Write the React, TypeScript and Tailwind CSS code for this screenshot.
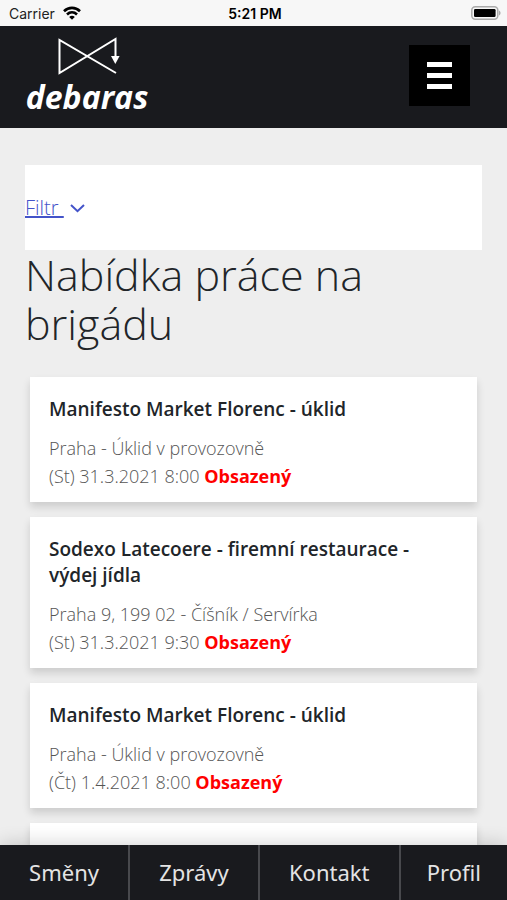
import { useState } from 'react';

type Job = {
  title: string;
  place: string;
  date: string;
  status: string;
};

const jobs: Job[] = [
  {
    title: 'Manifesto Market Florenc - úklid',
    place: 'Praha - Úklid v provozovně',
    date: '(St) 31.3.2021 8:00',
    status: 'Obsazený',
  },
  {
    title: 'Sodexo Latecoere - firemní restaurace - výdej jídla',
    place: 'Praha 9, 199 02 - Číšník / Servírka',
    date: '(St) 31.3.2021 9:30',
    status: 'Obsazený',
  },
  {
    title: 'Manifesto Market Florenc - úklid',
    place: 'Praha - Úklid v provozovně',
    date: '(Čt) 1.4.2021 8:00',
    status: 'Obsazený',
  },
];

const tabs = ['Směny', 'Zprávy', 'Kontakt', 'Profil'];

function StatusBar() {
  return (
    <div className="grid h-[26px] shrink-0 grid-cols-3 items-center bg-[#f7f7f7] pr-[6px] pl-[9px] font-['Inter','Liberation_Sans',sans-serif] text-[14px] text-[#222]">
      <div className="flex items-center gap-2">
        <span>Carrier</span>
        <svg width="18" height="14" viewBox="0 0 18 14" fill="none" stroke="#000" strokeWidth="2.6" aria-hidden="true">
          <path d="M1 5.2C5.6 .7 12.4 .7 17 5.2" />
          <path d="M4 8.5C6.9 5.7 11.1 5.7 14 8.5" />
          <path d="M6.2 10.9C7.8 9.4 10.2 9.4 11.8 10.9L9 13.7Z" fill="#000" stroke="none" />
        </svg>
      </div>
      <span className="text-center font-semibold text-black">5:21 PM</span>
      <svg className="justify-self-end" width="30" height="14" viewBox="0 0 30 14" aria-hidden="true">
        <rect x=".8" y=".8" width="26" height="12.4" rx="3.4" fill="#f7f7f7" stroke="#aaa" strokeWidth="1.5" />
        <rect x="3" y="3" width="21.6" height="8" rx="1.3" fill="#000" />
        <path d="M28 4.5C30 5.2 30 8.8 28 9.5Z" fill="#aaa" />
      </svg>
    </div>
  );
}

function Logo() {
  return (
    <a href="#" className="flex w-[122px] flex-col items-center text-white">
      <svg width="66" height="38" viewBox="0 0 66 38" fill="none" stroke="currentColor" strokeWidth="2" aria-hidden="true">
        <path d="M62 36L5.5 3V36L61.5 2V21" />
        <path d="M57 19H65.6L61.3 27Z" fill="currentColor" stroke="none" />
      </svg>
      <span className="pt-[5px] font-['Open_Sans',sans-serif] text-[32px] leading-[34px] font-bold italic">debaras</span>
    </a>
  );
}

function JobCard({ job }: { job: Job }) {
  return (
    <article className="bg-white px-[19px] pt-[19px] pb-3 shadow-[0_5px_8px_rgba(0,0,0,0.14)]">
      <h2 className="mb-3 text-[19px] leading-[26px] font-semibold text-[#212529]">{job.title}</h2>
      <p className="text-[18px] leading-7 font-light text-[#555]">{job.place}</p>
      <p className="text-[18px] leading-7 font-light text-[#555]">
        {job.date} <strong className="font-bold text-[#f00]">{job.status}</strong>
      </p>
    </article>
  );
}

export default function App() {
  const [filterOpen, setFilterOpen] = useState(false);

  return (
    <div className="flex h-screen flex-col overflow-hidden bg-[#eee] font-['Open_Sans','Noto_Sans',sans-serif]">
      <StatusBar />

      <header className="flex shrink-0 items-start justify-between bg-[#191a1e] pt-[11px] pr-[37px] pb-[14px] pl-[26px]">
        <Logo />
        <button type="button" aria-label="Menu" className="mt-2 flex h-[61px] w-[61px] flex-col items-center justify-center gap-[6px] bg-black">
          <span className="h-[5px] w-[25px] bg-white" />
          <span className="h-[5px] w-[25px] bg-white" />
          <span className="h-[5px] w-[25px] bg-white" />
        </button>
      </header>

      <main className="min-h-0 flex-1 overflow-y-auto px-[25px] pt-[37px] [scrollbar-width:none]">
        <div className="bg-white pt-[30px] pb-[29px]">
          <button
            type="button"
            aria-expanded={filterOpen}
            onClick={() => setFilterOpen(!filterOpen)}
            className="flex items-center gap-[6px] text-[20px] leading-[26px] font-light text-[#4353c9]"
          >
            <span className="whitespace-pre underline">Filtr </span>
            <svg width="15" height="10" viewBox="0 0 15 10" fill="none" stroke="currentColor" strokeWidth="2" aria-hidden="true">
              <path d="M1 2L7.5 8.2L14 2" />
            </svg>
          </button>
        </div>

        <h1 className="mb-[29px] text-[43px] leading-[49px] font-light text-[#212529]">Nabídka práce na brigádu</h1>

        <div className="flex flex-col gap-[15px] px-[5px]">
          {jobs.map((job) => (
            <JobCard key={job.date} job={job} />
          ))}
          <div className="h-[125px] bg-white shadow-[0_5px_8px_rgba(0,0,0,0.14)]" />
        </div>
      </main>

      <nav className="relative flex shrink-0 bg-[#191a1e] shadow-[0_0_20px_rgba(0,0,0,0.2)]">
        {tabs.map((tab) => (
          <a
            key={tab}
            href="#"
            className="flex h-[55px] grow items-center justify-center border-r-2 border-[#48494d] px-[29px] font-['Noto_Sans',sans-serif] text-[22px] text-[#e4e4e4] last:border-r-0 last:px-[26px]"
          >
            {tab}
          </a>
        ))}
      </nav>
    </div>
  );
}
